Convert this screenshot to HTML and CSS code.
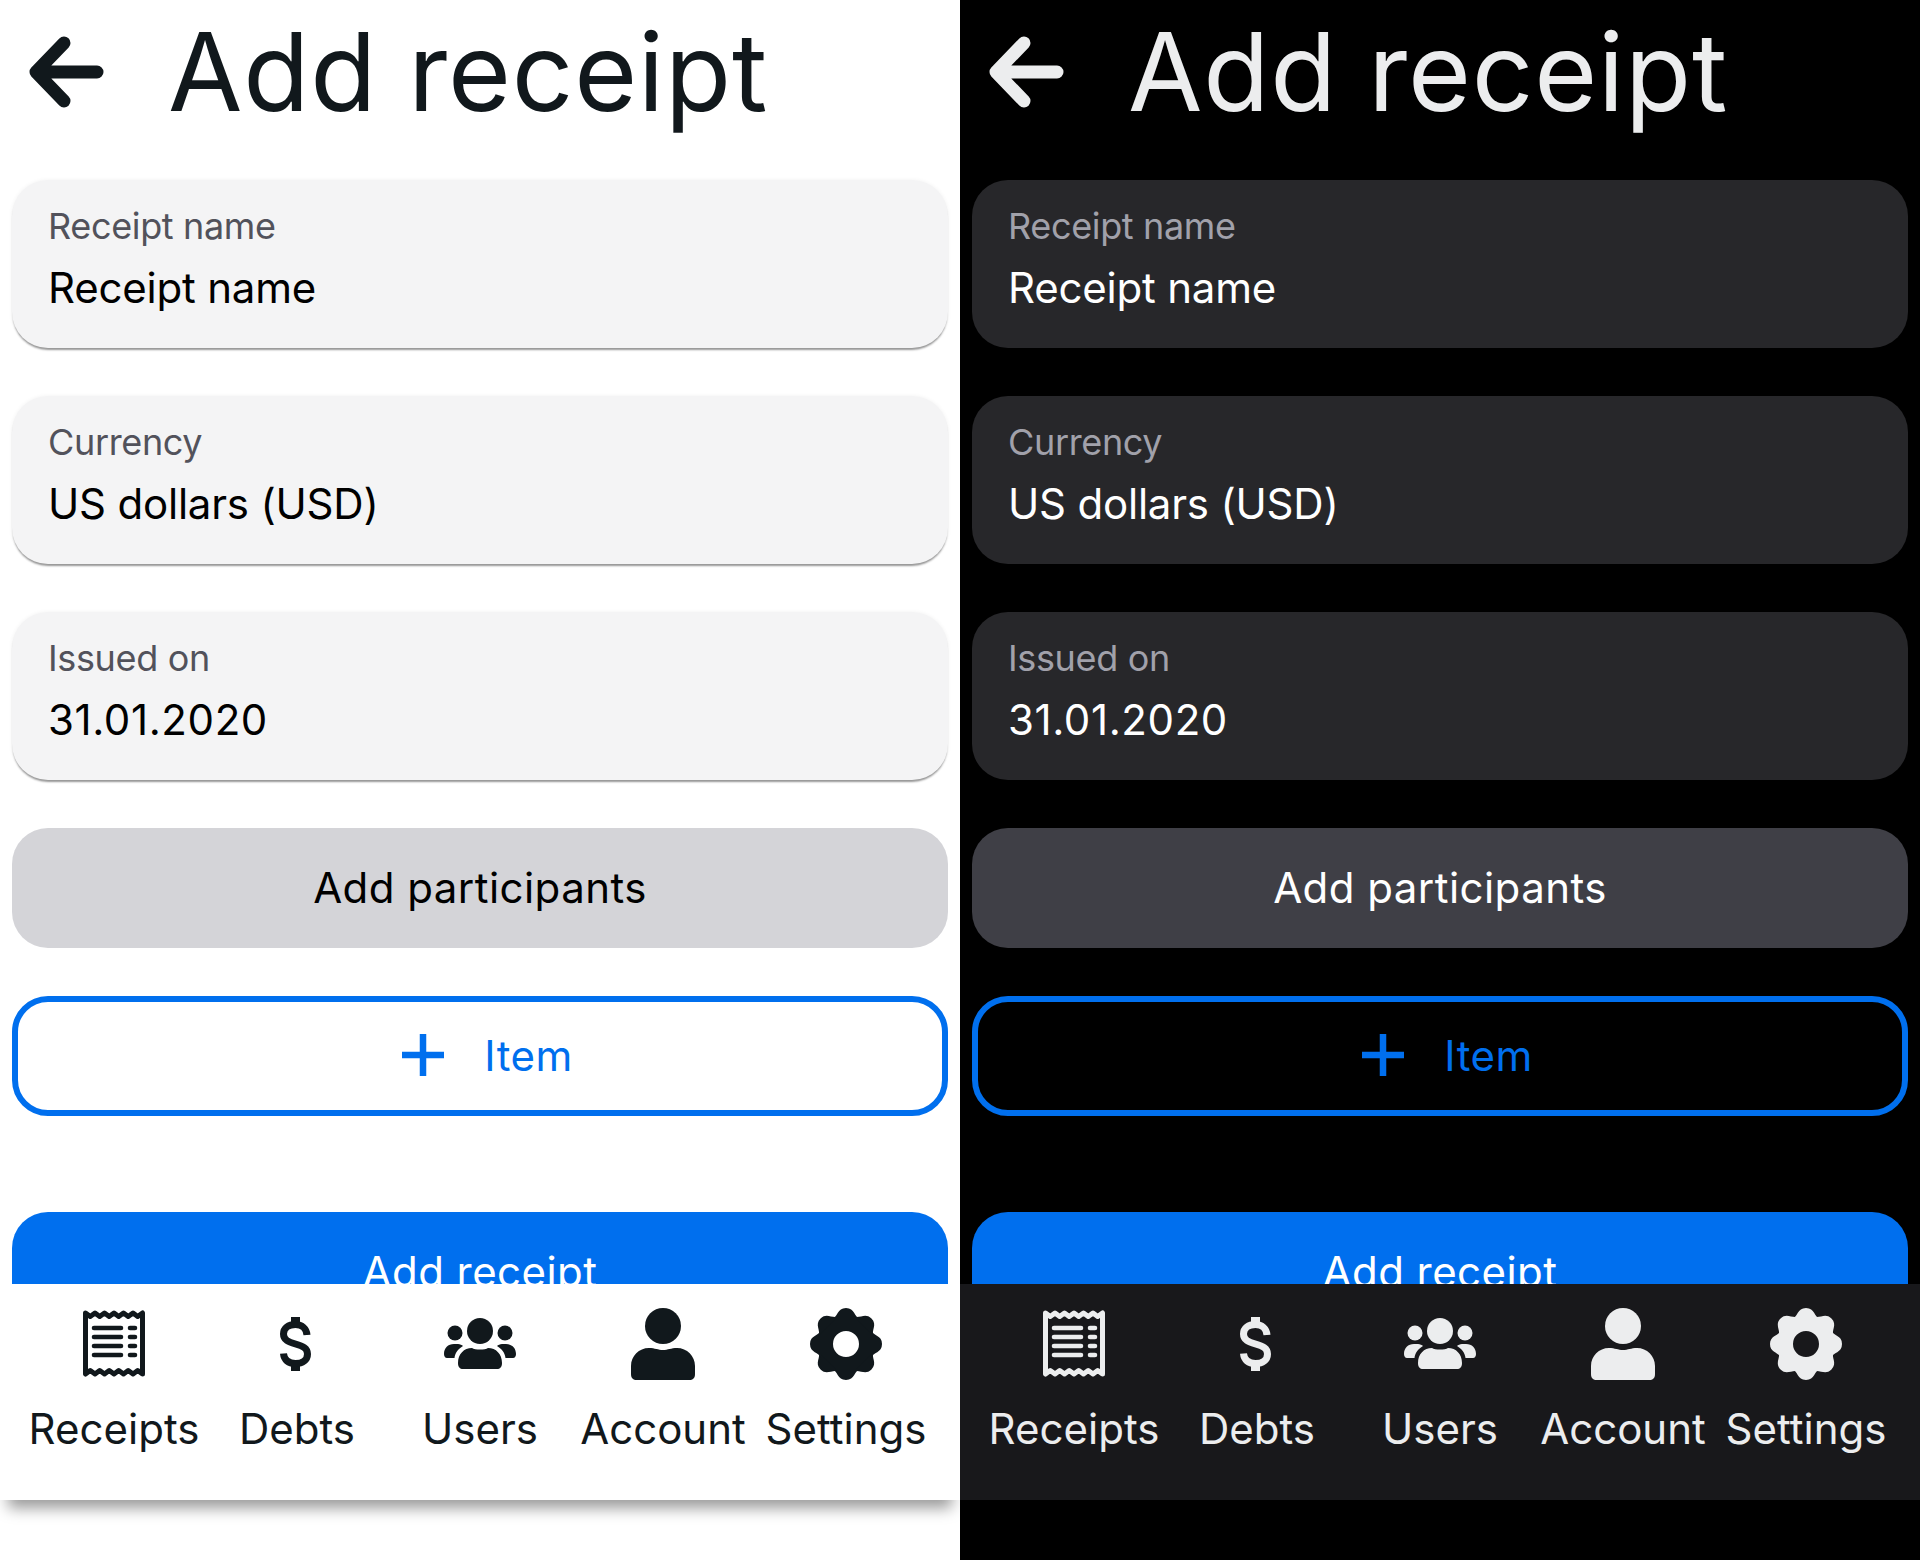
FILE: index.html
```html
<!DOCTYPE html>
<html>
<head>
    <meta charset="UTF-8">
    <meta name="viewport" content="width=device-width, initial-scale=1.0">
    <title>Add receipt</title>
    <link rel="stylesheet" href="styles.css">
</head>
<body>
    <svg class="icon-defs" xmlns="http://www.w3.org/2000/svg">
        <symbol id="i-back" viewBox="0 0 76 72">
            <path d="M36 7 L8 36 L36 65 M10 36 H69" fill="none" stroke="currentColor" stroke-width="13" stroke-linecap="round" stroke-linejoin="round"/>
        </symbol>
        <symbol id="i-plus" viewBox="0 0 42 42">
            <path d="M21 0 V42 M0 21 H42" fill="none" stroke="currentColor" stroke-width="6.5"/>
        </symbol>
        <symbol id="i-receipt" viewBox="0 0 72 72">
            <path d="M7.5 5 L12.2 8.5 L17 5 L21.7 8.5 L26.5 5 L31.2 8.5 L36 5 L40.7 8.5 L45.5 5 L50.2 8.5 L55 5 L59.7 8.5 L64.5 5 V66 L59.7 62.5 L55 66 L50.2 62.5 L45.5 66 L40.7 62.5 L36 66 L31.2 62.5 L26.5 66 L21.7 62.5 L17 66 L12.2 62.5 L7.5 66 Z" fill="none" stroke="currentColor" stroke-width="5" stroke-linejoin="round"/>
            <path d="M16 20 H43 M16 29 H43 M16 38 H43 M16 47 H43 M52 20 H57 M52 29 H57 M52 38 H57 M52 47 H57" fill="none" stroke="currentColor" stroke-width="4.6" stroke-linecap="round"/>
        </symbol>
        <symbol id="i-dollar" viewBox="1.5 0 72 72">
            <rect x="31.5" y="9" width="9" height="10" fill="currentColor"/>
            <rect x="31.5" y="53" width="9" height="10" fill="currentColor"/>
            <path d="M47.5 27 C47 20.500 42 16.500 36 16.500 C29 16.500 24 20 24 26 C24 32 29 34 36 36 C43 38 48 40 48 46 C48 52 43 55.500 36 55.500 C29 55.500 24.500 52 24 45.500" fill="none" stroke="currentColor" stroke-width="7"/>
        </symbol>
        <symbol id="i-users" viewBox="0 0 72 72">
            <circle cx="36" cy="23" r="13" fill="currentColor"/>
            <circle cx="11" cy="25" r="7.5" fill="currentColor"/>
            <circle cx="61" cy="25" r="7.5" fill="currentColor"/>
            <path d="M14 55 C14 46 20 40 28 40 C31 42 41 42 44 40 C52 40 58 46 58 55 C58 59 56 61 53 61 H19 C16 61 14 59 14 55 Z" fill="currentColor"/>
            <path d="M0 46 C0 40 4 36 10 36 H14 C16 36 18 37 19 38 C14 41 11 45 10.500 50 H3 C1 50 0 48 0 46 Z" fill="currentColor"/>
            <path d="M72 46 C72 40 68 36 62 36 H58 C56 36 54 37 53 38 C58 41 61 45 61.500 50 H69 C71 50 72 48 72 46 Z" fill="currentColor"/>
        </symbol>
        <symbol id="i-account" viewBox="0 0 72 72">
            <circle cx="36" cy="18" r="18" fill="currentColor"/>
            <path d="M4 66 V58 C4 48 12 40 22 40 C28 40 31 42 36 42 C41 42 44 40 50 40 C60 40 68 48 68 58 V66 C68 70 66 72 62 72 H10 C6 72 4 70 4 66 Z" fill="currentColor"/>
        </symbol>
        <symbol id="i-settings" viewBox="-36 -36 72 72">
            <circle r="21" fill="none" stroke="currentColor" stroke-width="16"/>
            <g fill="currentColor">
                <path id="lobe" d="M-14 -25 C-8 -27 -9 -36 0 -36 C9 -36 8 -27 14 -25 Z"/>
                <use href="#lobe" transform="rotate(45)"/>
                <use href="#lobe" transform="rotate(90)"/>
                <use href="#lobe" transform="rotate(135)"/>
                <use href="#lobe" transform="rotate(180)"/>
                <use href="#lobe" transform="rotate(225)"/>
                <use href="#lobe" transform="rotate(270)"/>
                <use href="#lobe" transform="rotate(315)"/>
            </g>
        </symbol>
    </svg>

    <div class="screens">
        <section class="screen light">
            <div class="content">
                <header class="header">
                    <svg class="back-icon"><use href="#i-back"/></svg>
                    <h1>Add receipt</h1>
                </header>
                <div class="stack">
                    <div class="field"><label>Receipt name</label><div class="value">Receipt name</div></div>
                    <div class="field"><label>Currency</label><div class="value">US dollars (USD)</div></div>
                    <div class="field"><label>Issued on</label><div class="value date">31.01.2020</div></div>
                    <button class="btn btn-default">Add participants</button>
                    <button class="btn btn-outline"><svg class="plus-icon"><use href="#i-plus"/></svg>Item</button>
                    <button class="btn btn-primary">Add receipt</button>
                </div>
            </div>
            <nav class="tabs">
                <a class="tab"><svg class="tab-icon"><use href="#i-receipt"/></svg><span>Receipts</span></a>
                <a class="tab"><svg class="tab-icon"><use href="#i-dollar"/></svg><span>Debts</span></a>
                <a class="tab"><svg class="tab-icon"><use href="#i-users"/></svg><span>Users</span></a>
                <a class="tab"><svg class="tab-icon"><use href="#i-account"/></svg><span>Account</span></a>
                <a class="tab"><svg class="tab-icon"><use href="#i-settings"/></svg><span>Settings</span></a>
            </nav>
        </section>

        <section class="screen dark">
            <div class="content">
                <header class="header">
                    <svg class="back-icon"><use href="#i-back"/></svg>
                    <h1>Add receipt</h1>
                </header>
                <div class="stack">
                    <div class="field"><label>Receipt name</label><div class="value">Receipt name</div></div>
                    <div class="field"><label>Currency</label><div class="value">US dollars (USD)</div></div>
                    <div class="field"><label>Issued on</label><div class="value date">31.01.2020</div></div>
                    <button class="btn btn-default">Add participants</button>
                    <button class="btn btn-outline"><svg class="plus-icon"><use href="#i-plus"/></svg>Item</button>
                    <button class="btn btn-primary">Add receipt</button>
                </div>
            </div>
            <nav class="tabs">
                <a class="tab"><svg class="tab-icon"><use href="#i-receipt"/></svg><span>Receipts</span></a>
                <a class="tab"><svg class="tab-icon"><use href="#i-dollar"/></svg><span>Debts</span></a>
                <a class="tab"><svg class="tab-icon"><use href="#i-users"/></svg><span>Users</span></a>
                <a class="tab"><svg class="tab-icon"><use href="#i-account"/></svg><span>Account</span></a>
                <a class="tab"><svg class="tab-icon"><use href="#i-settings"/></svg><span>Settings</span></a>
            </nav>
        </section>
    </div>
</body>
</html>
```
FILE: styles.css
```css
body {
    margin: 0;
    font-family: Inter, "Liberation Sans", sans-serif;
}

.icon-defs {
    display: none;
}

.screens {
    display: flex;
    height: 1560px;
}

.screen {
    width: 960px;
    height: 1560px;
    overflow: hidden;
}

.light {
    background: #fff;
    color: #11181c;
    --field-bg: #f4f4f5;
    --field-shadow: 0 3px 2px -1px rgba(0, 0, 0, 0.4), 0 0 4px rgba(0, 0, 0, 0.06);
    --label: #52525b;
    --value: #000;
    --btn-bg: #d4d4d8;
    --tabs-bg: #fff;
    --tabs-shadow: 0 16px 14px -8px rgba(0, 0, 0, 0.4);
}

.dark {
    background: #000;
    color: #ecedee;
    --field-bg: #27272a;
    --field-shadow: none;
    --label: #a1a1aa;
    --value: #fff;
    --btn-bg: #3f3f46;
    --tabs-bg: #18181b;
    --tabs-shadow: none;
}

.content {
    height: 1284px;
    padding: 0 12px;
    box-sizing: border-box;
    overflow: hidden;
}

.header {
    height: 180px;
    display: flex;
    align-items: center;
    padding-left: 16px;
    box-sizing: border-box;
}

.back-icon {
    width: 76px;
    height: 72px;
    flex: none;
    margin-top: -36px;
}

h1 {
    margin: -36px 0 0 64px;
    font-size: 108px;
    line-height: 144px;
    font-weight: 400;
    letter-spacing: 0.8px;
}

.stack {
    display: flex;
    flex-direction: column;
    gap: 48px;
}

.field {
    height: 168px;
    flex: none;
    box-sizing: border-box;
    padding: 22px 36px 0;
    border-radius: 36px;
    background: var(--field-bg);
    box-shadow: var(--field-shadow);
}

.field label {
    display: block;
    font-size: 36px;
    line-height: 48px;
    letter-spacing: -0.35px;
    color: var(--label);
}

.value {
    margin-top: 8px;
    font-size: 42px;
    line-height: 60px;
    letter-spacing: -0.2px;
    color: var(--value);
}

.date {
    letter-spacing: 0.6px;
}

.btn {
    width: 100%;
    height: 120px;
    flex: none;
    box-sizing: border-box;
    border: none;
    border-radius: 36px;
    display: flex;
    align-items: center;
    justify-content: center;
    font-family: inherit;
    font-size: 42px;
    letter-spacing: 0.45px;
    padding: 0 0 2px;
}

.btn-default {
    background: var(--btn-bg);
    color: var(--value);
}

.btn-outline {
    background: transparent;
    border: 6px solid #006fee;
    color: #006fee;
    padding-left: 15px;
}

.plus-icon {
    width: 42px;
    height: 42px;
    margin-right: 40px;
}

.btn-primary {
    margin-top: 48px;
    background: #006fee;
    color: #fff;
}

.tabs {
    height: 216px;
    display: grid;
    grid-template-columns: repeat(5, 1fr);
    padding: 24px 22.5px 0;
    box-sizing: border-box;
    background: var(--tabs-bg);
    box-shadow: var(--tabs-shadow);
    position: relative;
}

.tab {
    display: flex;
    flex-direction: column;
    align-items: center;
    min-width: 0;
    font-size: 42px;
    line-height: 60px;
    white-space: nowrap;
}

.tab-icon {
    width: 72px;
    height: 72px;
    margin-bottom: 19px;
}
```
